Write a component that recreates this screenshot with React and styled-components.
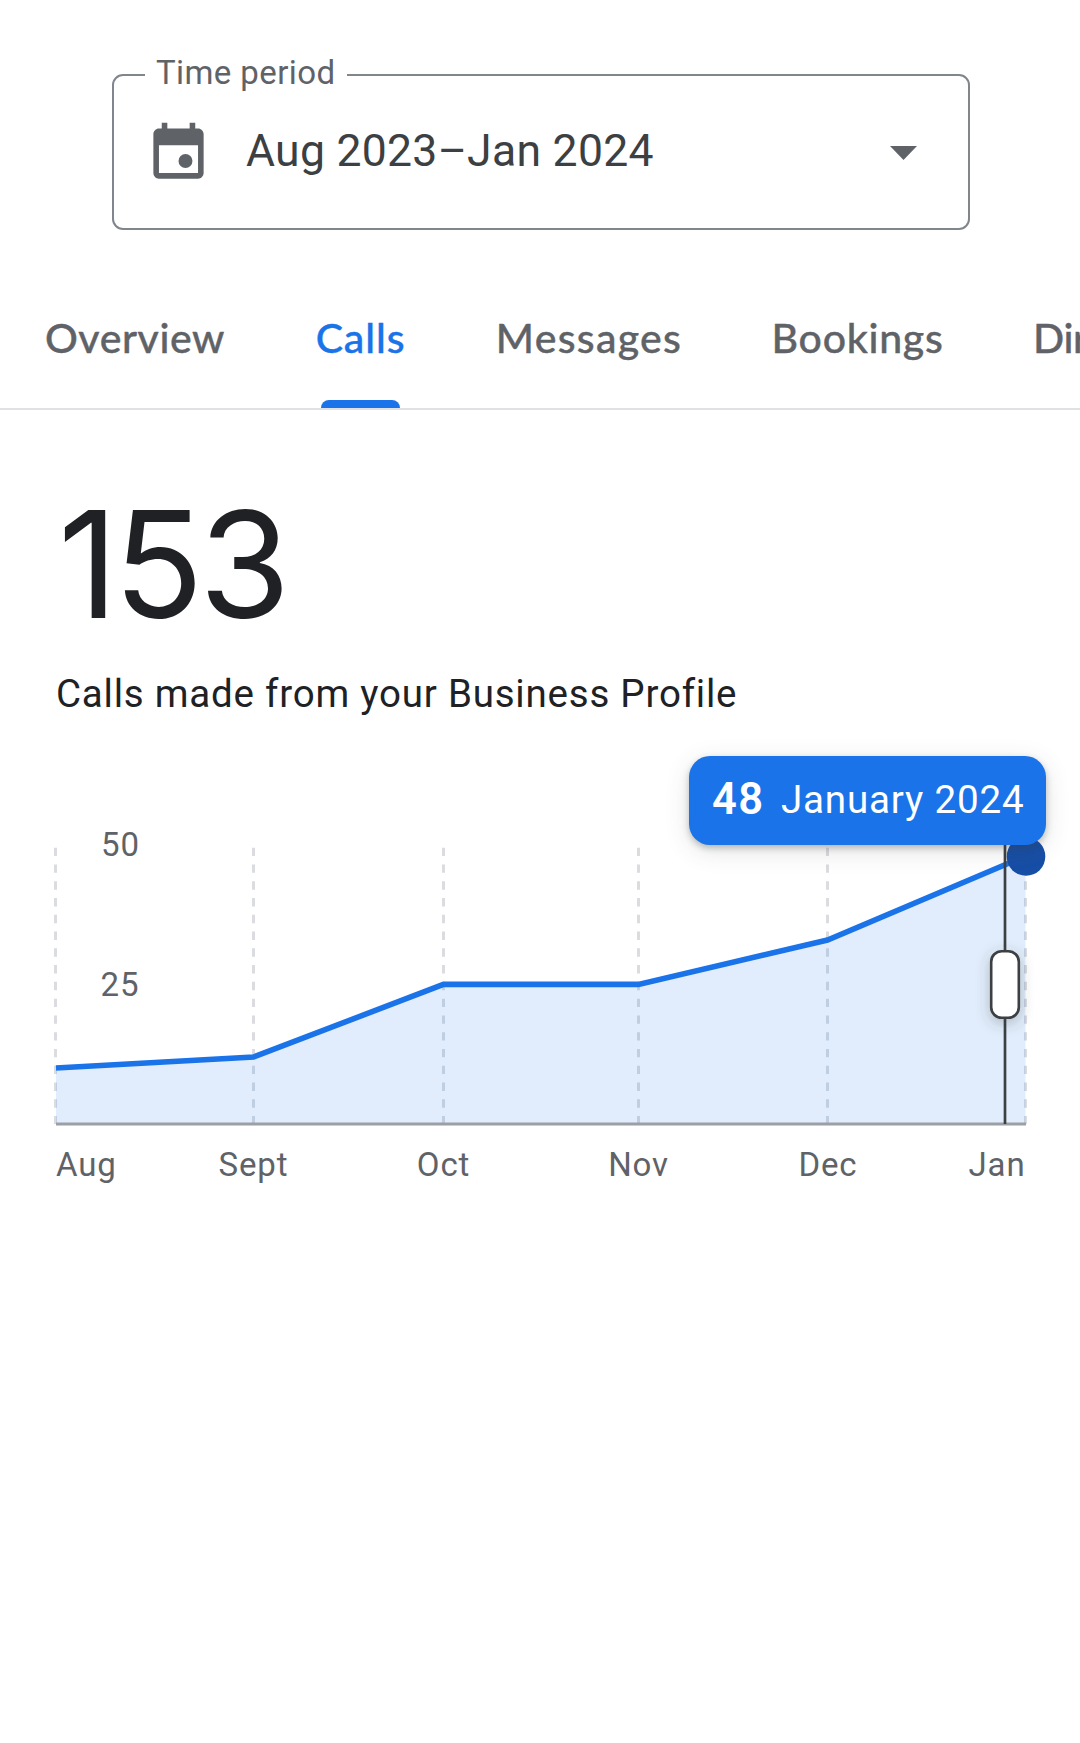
import React from "react";
import styled, { createGlobalStyle } from "styled-components";

const GlobalStyle = createGlobalStyle`
  * { box-sizing: border-box; }
  body {
    margin: 0;
    background: #fff;
    overflow: hidden;
    font-family: Roboto, "Liberation Sans", sans-serif;
  }
`;

const Page = styled.main`
  width: 1080px;
  height: 1743px;
  background: #fff;
  overflow: hidden;
`;

const FieldArea = styled.div`
  padding: 74px 110px 0 112px;
  height: 270px;
`;

const Field = styled.div`
  position: relative;
  display: flex;
  align-items: center;
  height: 156px;
  padding: 2px 51px 0 31px;
  border: 2px solid #80868b;
  border-radius: 11px;
`;

const FieldLabel = styled.span`
  position: absolute;
  top: -23px;
  left: 31px;
  width: 202px;
  padding-left: 11px;
  background: #fff;
  color: #5f6368;
  font-size: 33px;
  line-height: 40px;
  letter-spacing: 0.4px;
  white-space: nowrap;
`;

const FieldValue = styled.span`
  flex: 1;
  margin-left: 34px;
  padding-bottom: 5px;
  color: #3c4043;
  font-size: 44.5px;
  line-height: 56px;
  letter-spacing: 0.28px;
  white-space: nowrap;
`;

const TabBar = styled.nav`
  display: flex;
  gap: 92px;
  height: 140px;
  padding-left: 45px;
  border-bottom: 2px solid #dfe1e5;
`;

const Tab = styled.div`
  display: flex;
  flex-direction: column;
  flex: none;
  align-items: ${(p) => (p.$clipped ? "flex-start" : "center")};
  justify-content: space-between;
  width: ${(p) => p.$width}px;
  height: 138px;
  padding-top: 39px;
  color: ${(p) => (p.$active ? "#1a73e8" : "#5f6368")};
  font-family: Lato, Roboto, sans-serif;
  font-weight: 500;
  font-size: 41px;
  line-height: 58px;
  letter-spacing: ${(p) => p.$spacing}px;
  -webkit-text-stroke: 0.4px currentColor;
  white-space: nowrap;
`;

const Indicator = styled.span`
  width: 79px;
  height: 8px;
  border-radius: 8px 8px 0 0;
  background: #1a73e8;
`;

const Summary = styled.section`
  padding: 80px 56px 0;
  height: 345px;
  color: #202124;
`;

const Total = styled.div`
  padding-left: 2px;
  font-family: Inter, Roboto, sans-serif;
  font-size: 148px;
  line-height: 150px;
  letter-spacing: -4.6px;
`;

const Caption = styled.div`
  margin-top: 27px;
  font-size: 38.5px;
  line-height: 54px;
  letter-spacing: 0.78px;
  white-space: nowrap;
`;

const ChartArea = styled.section`
  position: relative;
  height: 460px;
`;

const Chart = styled.svg`
  display: block;
`;

const AxisText = styled.text`
  fill: #5f6368;
  font-family: Roboto, sans-serif;
  font-size: 33px;
  letter-spacing: 0.85px;
`;

const Tooltip = styled.div`
  position: absolute;
  top: 0.5px;
  left: 689px;
  display: flex;
  align-items: center;
  width: 357px;
  height: 89px;
  padding-left: 23px;
  border-radius: 21px;
  background: #1a73e8;
  color: #fff;
  box-shadow: 0 3px 6px rgba(60, 64, 67, 0.3), 0 6px 24px rgba(60, 64, 67, 0.15);
  white-space: nowrap;
`;

const TooltipValue = styled.strong`
  width: 69px;
  font-size: 43.5px;
  font-weight: 600;
  line-height: 50px;
  letter-spacing: 1.4px;
`;

const TooltipDate = styled.span`
  font-size: 38.6px;
  line-height: 50px;
  letter-spacing: 0.8px;
`;

const TABS = [
  { name: "Overview", width: 180, spacing: 0.6 },
  { name: "Calls", width: 87, spacing: 0.9, active: true },
  { name: "Messages", width: 186, spacing: 1.3 },
  { name: "Bookings", width: 167, spacing: 0.7 },
  { name: "Directions", width: 200, spacing: -0.4, clipped: true },
];

/* Chart coordinates; the chart area starts at the tooltip's top edge. */
const BASE = 369;
const POINTS = [
  { month: "Aug", x: 55.5, y: 313, labelX: 56, anchor: "start" },
  { month: "Sept", x: 253.5, y: 302, labelX: 253.5, anchor: "middle" },
  { month: "Oct", x: 443.5, y: 229.4, labelX: 443.5, anchor: "middle" },
  { month: "Nov", x: 638.5, y: 229.4, labelX: 638.5, anchor: "middle" },
  { month: "Dec", x: 827.5, y: 185, labelX: 828, anchor: "middle" },
  { month: "Jan", x: 1025.5, y: 101, labelX: 1025.5, anchor: "end" },
];

const linePoints = POINTS.map((p, i) => `${i === 0 ? 56 : p.x},${p.y}`).join(" ");

function CalendarIcon() {
  return (
    <svg width="67" height="67" viewBox="0 0 24 24" fill="#5f6368">
      <path
        fillRule="evenodd"
        d="M6 1h2v2h8V1h2v2h1c1.1 0 2 .9 2 2v14c0 1.1-.9 2-2 2H5c-1.1 0-2-.9-2-2V5c0-1.1.9-2 2-2h1zM5 9v10h14V9z"
      />
      <circle cx="14.5" cy="14.7" r="2.5" />
    </svg>
  );
}

function CallsChart() {
  return (
    <Chart width="1080" height="460" viewBox="0 0 1080 460">
      <defs>
        <filter id="handleShadow" x="-150%" y="-60%" width="400%" height="220%">
          <feDropShadow dx="0" dy="4" stdDeviation="7" floodColor="#3c4043" floodOpacity="0.3" />
        </filter>
      </defs>
      {POINTS.map((p) => (
        <line key={p.month} x1={p.x} x2={p.x} y1="92.7" y2={BASE} stroke="#dadce0" strokeWidth="3" strokeDasharray="8.4 8.37" />
      ))}
      <polygon points={`56,${BASE} ${linePoints} 1025.5,${BASE}`} fill="#1a73e8" fillOpacity="0.13" />
      <line x1="56" x2="1026" y1={BASE} y2={BASE} stroke="#9aa0a6" strokeWidth="3" />
      <polyline points={linePoints} fill="none" stroke="#1a73e8" strokeWidth="5.6" />
      <circle cx="1026" cy="101.5" r="19.3" fill="#174ea6" />
      <line x1="1005" x2="1005" y1="80" y2={BASE} stroke="#3c4043" strokeWidth="2.7" />
      <rect x="991.2" y="196.2" width="27.6" height="66.6" rx="10.5" fill="#fff" stroke="#3c4043" strokeWidth="2.6" filter="url(#handleShadow)" />
      <AxisText x="101" y="100.5">50</AxisText>
      <AxisText x="100.5" y="240.5">25</AxisText>
      {POINTS.map((p) => (
        <AxisText key={p.month} x={p.labelX} y="420.6" textAnchor={p.anchor}>{p.month}</AxisText>
      ))}
    </Chart>
  );
}

export default function App() {
  return (
    <Page>
      <GlobalStyle />
      <FieldArea>
        <Field>
          <FieldLabel>Time period</FieldLabel>
          <CalendarIcon />
          <FieldValue>Aug 2023–Jan 2024</FieldValue>
          <svg width="27" height="14" viewBox="0 0 27 14">
            <path d="M0 0h27L13.5 14z" fill="#5f6368" />
          </svg>
        </Field>
      </FieldArea>
      <TabBar>
        {TABS.map((t) => (
          <Tab key={t.name} $width={t.width} $spacing={t.spacing} $active={t.active} $clipped={t.clipped}>
            {t.name}
            {t.active && <Indicator />}
          </Tab>
        ))}
      </TabBar>
      <Summary>
        <Total>153</Total>
        <Caption>Calls made from your Business Profile</Caption>
      </Summary>
      <ChartArea>
        <CallsChart />
        <Tooltip>
          <TooltipValue>48</TooltipValue>
          <TooltipDate>January 2024</TooltipDate>
        </Tooltip>
      </ChartArea>
    </Page>
  );
}
